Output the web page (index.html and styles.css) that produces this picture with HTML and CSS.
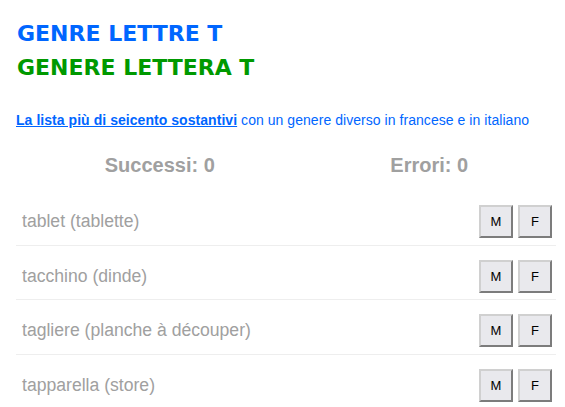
FILE: index.html
```html
<!DOCTYPE html>
<html>
    <head>
        <title>Genere lettera T</title>
        <link rel="stylesheet" href="styles.css">
    </head>
    <body>
        <div class="page">
            <h1 class="title-fr">GENRE LETTRE T</h1>
            <h1 class="title-it">GENERE LETTERA T</h1>
            <p class="intro"><a href="#">La lista più di seicento sostantivi</a> con un genere diverso in francese e in italiano</p>

            <div class="score">
                <span>Successi: 0</span>
                <span>Errori: 0</span>
            </div>

            <div class="words">
                <div class="word">
                    <span>tablet (tablette)</span>
                    <div class="choices"><button>M</button><button>F</button></div>
                </div>
                <div class="word">
                    <span>tacchino (dinde)</span>
                    <div class="choices"><button>M</button><button>F</button></div>
                </div>
                <div class="word">
                    <span>tagliere (planche à découper)</span>
                    <div class="choices"><button>M</button><button>F</button></div>
                </div>
                <div class="word">
                    <span>tapparella (store)</span>
                    <div class="choices"><button>M</button><button>F</button></div>
                </div>
            </div>
        </div>
    </body>
</html>
```

FILE: styles.css
```css
body {
  margin: 0;
  font-family: "Liberation Sans", Arial, sans-serif;
  background: #fff;
}
.page {
  padding: 17px 9px 0 16px;
}
h1 {
  margin: 0;
  font-family: "DejaVu Sans", sans-serif;
  font-size: 22px;
  font-weight: bold;
  line-height: 34px;
  padding-left: 1px;
}
.title-fr {
  color: #0066ff;
}
.title-it {
  color: #009900;
}
.intro {
  margin: 27px 0 0;
  font-size: 14px;
  letter-spacing: 0.05px;
  color: #0066ff;
}
.intro a {
  color: #0066ff;
  font-weight: bold;
}
.score {
  display: grid;
  grid-template-columns: 1fr 1fr;
  margin: 26px -8px 0 9px;
  font-size: 20px;
  font-weight: bold;
  color: #a0a0a0;
  text-align: center;
}
.words {
  margin-top: 14px;
}
.word {
  display: flex;
  align-items: center;
  justify-content: space-between;
  height: 45.5px;
  padding: 8px 0 0 6px;
  border-bottom: 1px solid #eeeeee;
  font-size: 17.6px;
  color: #a0a0a0;
}
.choices {
  display: flex;
  gap: 5px;
  padding-right: 4px;
}
button {
  width: 34px;
  height: 33px;
  padding: 0;
  font-family: "Liberation Sans", Arial, sans-serif;
  font-size: 13px;
  color: #000;
  background: #e9e9ed;
  border: 2px outset #d0d0d0;
}
```
